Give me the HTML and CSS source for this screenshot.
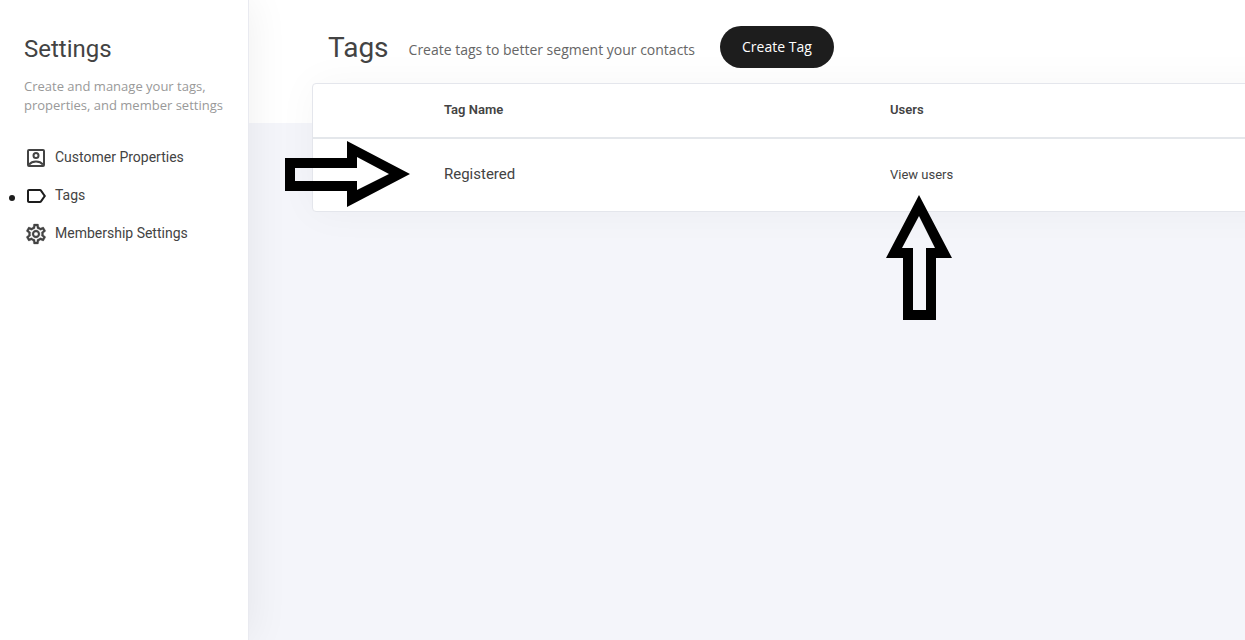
FILE: index.html
```html
<!DOCTYPE html>
<html lang="en">
<head>
<meta charset="utf-8">
<title>Tags</title>
<link rel="stylesheet" href="styles.css">
</head>
<body>
<div class="app">
  <aside class="sidebar">
    <h2 class="sidebar-title">Settings</h2>
    <p class="sidebar-text">Create and manage your tags, properties, and member settings</p>
    <nav class="menu">
      <a class="menu-item" href="#properties">
        <svg class="icon" viewBox="0 0 24 24" fill="none" stroke="currentColor" stroke-width="2"><rect x="4" y="4" width="16" height="16" rx="1"/><circle cx="12" cy="9.500" r="2.500"/><path d="M5 18.500C6.600 16.600 9.200 15.500 12 15.500s5.400 1.100 7 3"/></svg>
        <span>Customer Properties</span>
      </a>
      <a class="menu-item active" href="#tags" aria-current="page">
        <svg class="icon" viewBox="0 0 24 24" fill="currentColor"><path d="M17.630 5.840C17.270 5.330 16.670 5 16 5L5 5.010C3.900 5.010 3 5.900 3 7v10c0 1.100.9 1.990 2 1.990L16 19c.67 0 1.270-.33 1.630-.84L22 12l-4.370-6.160zM16 17H5V7h11l3.550 5L16 17z"/></svg>
        <span>Tags</span>
      </a>
      <a class="menu-item" href="#membership">
        <svg class="icon icon-bold" viewBox="0 0 24 24" fill="currentColor"><path d="M19.430 12.980c.04-.32.07-.64.07-.98 0-.34-.03-.66-.07-.98l2.110-1.650c.19-.15.24-.42.12-.64l-2-3.460c-.09-.16-.26-.25-.44-.25-.06 0-.12.01-.17.03l-2.490 1c-.52-.4-1.080-.73-1.690-.98l-.38-2.650C14.460 2.180 14.250 2 14 2h-4c-.25 0-.46.18-.49.42l-.38 2.650c-.61.25-1.170.59-1.690.98l-2.490-1c-.06-.02-.12-.03-.18-.03-.17 0-.34.09-.43.25l-2 3.460c-.13.22-.07.49.12.64l2.110 1.650c-.04.32-.07.65-.07.98 0 .33.03.66.07.98l-2.110 1.650c-.19.15-.24.42-.12.64l2 3.460c.09.16.26.25.44.25.06 0 .12-.01.17-.03l2.490-1c.52.4 1.080.73 1.690.98l.38 2.650c.03.24.24.42.49.42h4c.25 0 .46-.18.49-.42l.38-2.650c.61-.25 1.170-.59 1.690-.98l2.490 1c.06.02.12.03.18.03.17 0 .34-.09.43-.25l2-3.460c.12-.22.07-.49-.12-.64l-2.110-1.650zm-1.980-1.710c.04.31.05.52.05.73 0 .21-.02.43-.05.73l-.14 1.130.89.7 1.080.84-.7 1.210-1.270-.51-1.040-.42-.9.68c-.43.32-.84.56-1.250.73l-1.060.43-.16 1.130-.2 1.350h-1.400l-.19-1.350-.16-1.130-1.060-.43c-.43-.18-.83-.41-1.230-.71l-.91-.7-1.060.43-1.270.51-.7-1.210 1.080-.84.89-.7-.14-1.130c-.03-.31-.05-.54-.05-.74s.02-.43.05-.73l.14-1.130-.89-.7-1.080-.84.7-1.210 1.270.51 1.040.42.9-.68c.43-.32.84-.56 1.250-.73l1.060-.43.16-1.130.2-1.350h1.390l.19 1.350.16 1.130 1.060.43c.43.18.83.41 1.230.71l.91.7 1.060-.43 1.270-.51.7 1.210-1.070.85-.89.7.14 1.130zM12 8c-2.210 0-4 1.790-4 4s1.790 4 4 4 4-1.790 4-4-1.790-4-4-4zm0 6c-1.100 0-2-.9-2-2s.9-2 2-2 2 .9 2 2-.9 2-2 2z"/></svg>
        <span>Membership Settings</span>
      </a>
    </nav>
  </aside>
  <main class="content">
    <header class="page-head">
      <h1 class="page-title">Tags</h1>
      <p class="page-text">Create tags to better segment your contacts</p>
      <button class="create" type="button">Create Tag</button>
    </header>
    <section class="card">
      <table class="tags">
        <colgroup><col class="col-lead"><col class="col-name"><col></colgroup>
        <thead>
          <tr><td></td><th scope="col">Tag Name</th><th scope="col">Users</th></tr>
        </thead>
        <tbody>
          <tr>
            <td></td>
            <td class="name">Registered
              <svg class="arrow arrow-right" viewBox="0 0 125 66" aria-hidden="true"><path fill-rule="evenodd" d="M0 17H62V0L125 33L62 66V50H0ZM10 27V40H72V49L104 33L72 16V27Z"/></svg>
            </td>
            <td><a class="view" href="#users">View users
              <svg class="arrow arrow-up" viewBox="0 0 66 125" aria-hidden="true"><path fill-rule="evenodd" d="M33 0L66 63H50V125H17V63H0ZM33 21L16 53H27V115H40V53H49Z"/></svg></a>
            </td>
          </tr>
        </tbody>
      </table>
    </section>
  </main>
</div>
</body>
</html>
```
FILE: styles.css
```css
* { box-sizing: border-box; }

body {
  margin: 0;
  font-family: Roboto, sans-serif;
  color: #434343;
}

h1, h2, p { margin: 0; font-weight: 400; }

a { color: inherit; text-decoration: none; }

.app {
  display: flex;
  min-height: 100vh;
  overflow: hidden;
}

.sidebar {
  flex: 0 0 249px;
  padding: 33px 20px 32px 24px;
  background: #fff;
  border-right: 1px solid #e9eaf0;
  box-shadow: 0 0 40px rgba(0, 0, 0, 0.07);
  z-index: 1;
}

.sidebar-title { font-size: 24px; line-height: 32px; }

.sidebar-text {
  margin-top: 12px;
  font: 13px/19px "Open Sans", sans-serif;
  color: #999;
}

.menu {
  display: flex;
  flex-direction: column;
  gap: 12px;
  margin-top: 30px;
}

.menu-item {
  position: relative;
  display: flex;
  align-items: flex-end;
  gap: 7px;
  height: 26px;
  font-size: 14px;
  line-height: 24px;
}

.menu-item span { align-self: flex-start; }

.menu-item.active::before {
  content: "";
  position: absolute;
  left: -15px;
  top: 12px;
  width: 6px;
  height: 6px;
  border-radius: 50%;
  background: #1d1d1d;
}

.icon { width: 24px; height: 24px; margin-bottom: 1px; }

.icon-bold { stroke: currentColor; stroke-width: 0.3; }

.active .icon { color: #1d1d1d; }

.content {
  flex: 1;
  min-width: 0;
  padding-left: 63px;
  background: linear-gradient(#fff 123px, #f4f5fa 123px);
}

.page-head {
  display: flex;
  align-items: center;
  padding: 26px 16px 15px 16px;
  position: relative;
  z-index: 1;
}

.page-title { padding-top: 2px; font-size: 28px; line-height: 40px; }

.page-text {
  margin-left: 20px;
  padding-top: 5px;
  font: 14px/20px "Open Sans", sans-serif;
  color: #666;
}

.create {
  height: 42px;
  margin-left: 25px;
  padding: 0 22px;
  border: 0;
  border-radius: 21px;
  background: #1d1d1d;
  color: #fff;
  font: 14px/20px "Open Sans", sans-serif;
}

.card {
  margin-right: -48px;
  background: #fff;
  border: 1px solid #e4e6ec;
  border-radius: 4px;
  box-shadow: 0 0 40px rgba(0, 0, 0, 0.04);
}

.tags {
  width: 100%;
  table-layout: fixed;
  border-collapse: collapse;
}

.col-lead { width: 131px; }
.col-name { width: 446px; }

.tags th, .tags td { padding: 0 0 3px; text-align: left; }

.tags thead tr {
  height: 54px;
  border-bottom: 2px solid #e4e7eb;
}

.tags th { font-size: 13px; font-weight: 600; }

.tags tbody tr { height: 73px; }

.tags .name { position: relative; font-size: 15px; }

.view { position: relative; font-size: 13px; }

.arrow { position: absolute; fill: #000; }

.arrow-right {
  width: 125px;
  height: 66px;
  left: -159px;
  top: 2px;
  z-index: 2;
}

.arrow-up {
  width: 66px;
  height: 125px;
  left: -4px;
  top: 28px;
}
```
